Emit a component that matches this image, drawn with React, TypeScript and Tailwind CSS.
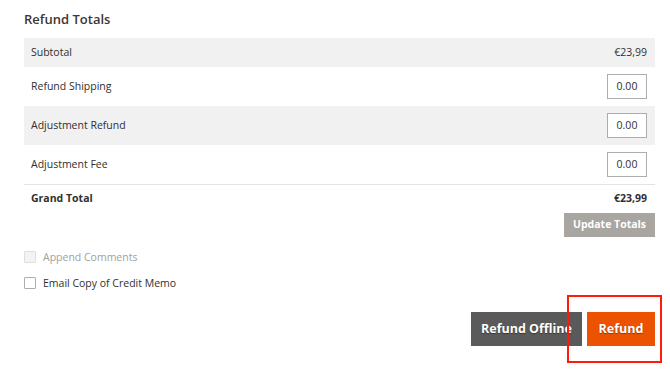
const rows = [
  { label: 'Subtotal', value: '€23,99', shaded: true },
  { label: 'Refund Shipping', input: '0.00' },
  { label: 'Adjustment Refund', input: '0.00', shaded: true },
  { label: 'Adjustment Fee', input: '0.00' },
];

export default function App() {
  return (
    <div className="h-[370px] w-[670px] overflow-hidden bg-white px-6 pt-[9px] text-[10.5px] text-[#303030] [font-family:'Open_Sans',sans-serif]">
      <h2 className="text-[13px] font-semibold leading-[20px] text-[#41362f]">Refund Totals</h2>

      <div className="mt-[9px] w-[631px]">
        {rows.map((row) => (
          <div
            key={row.label}
            className={`flex items-center justify-between pl-[7px] pr-[8px] ${row.shaded ? 'bg-[#f1f1f1]' : 'bg-white'} ${row.input ? 'h-[39px]' : 'h-[29px]'}`}
          >
            <span>{row.label}</span>
            {row.input ? (
              <span className="flex h-[25px] w-[40px] items-center justify-center border border-[#adadad] bg-white text-[10.5px] text-[#303030]">
                {row.input}
              </span>
            ) : (
              <span className="text-[10.5px]">{row.value}</span>
            )}
          </div>
        ))}
        <div className="flex h-[29px] items-center justify-between border-t border-[#e3e3e3] pl-[7px] pr-[8px] font-bold">
          <span>Grand Total</span>
          <span>€23,99</span>
        </div>
        <div className="flex justify-end">
          <button className="h-[24px] w-[91px] bg-[#a9a5a1] text-[10.5px] font-bold text-white">Update Totals</button>
        </div>
      </div>

      <div className="mt-[14px] flex flex-col gap-[14px]">
        <label className="flex items-center gap-[7px] leading-[12px] text-[#a0a0a0]">
          <span className="h-[12px] w-[12px] rounded-[1px] border border-[#dedede] bg-[#f3f3f3]" />
          Append Comments
        </label>
        <label className="flex items-center gap-[7px] leading-[12px]">
          <span className="h-[12px] w-[12px] rounded-[1px] border border-[#adadad] bg-white" />
          Email Copy of Credit Memo
        </label>
      </div>

      <div className="relative mt-[23px] flex w-[631px] justify-end gap-[5px]">
        <button className="h-[34px] w-[111px] bg-[#5a5a5a] text-[12.5px] font-bold text-white [text-shadow:0_1px_1px_rgba(0,0,0,0.4)]">
          Refund Offline
        </button>
        <button className="h-[34px] w-[68px] bg-[#eb5202] text-[12.5px] font-bold text-white [text-shadow:0_1px_1px_rgba(0,0,0,0.35)]">
          Refund
        </button>
        <div className="absolute right-[-7px] top-[-17px] h-[68px] w-[95px] border-2 border-[#ff1a0a]" />
      </div>
    </div>
  );
}
